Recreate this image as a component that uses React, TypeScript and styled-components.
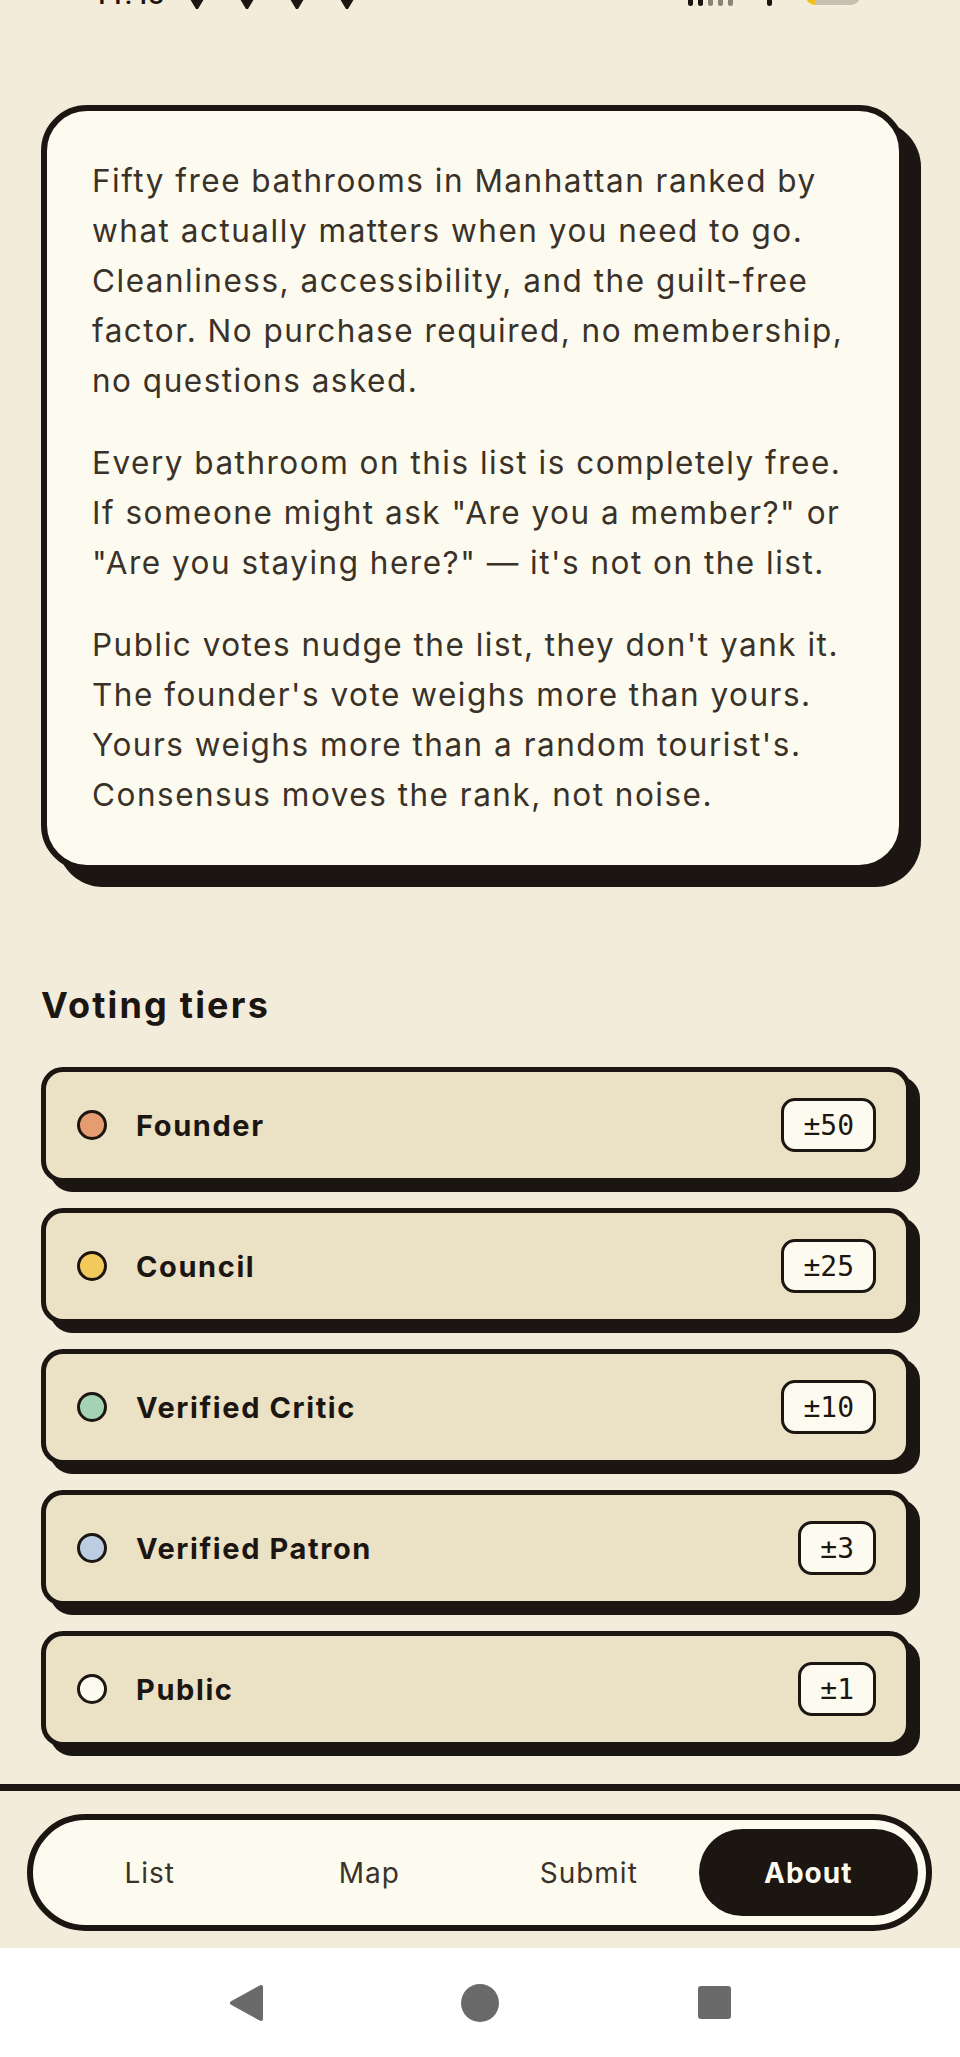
import React from "react";
import styled, { createGlobalStyle } from "styled-components";

const C = {
  bg: "#f3ecda",
  cream: "#fdfbef",
  row: "#ebe1c5",
  ink: "#1b1612",
  text: "#3a3229",
  sysIcon: "#6a6a6a",
};

const GlobalStyle = createGlobalStyle`
  html, body { margin: 0; padding: 0; background: ${C.bg}; }
  body { font-family: Inter, "Noto Sans", sans-serif; -webkit-font-smoothing: antialiased; }
  * { box-sizing: border-box; }
`;

const Screen = styled.div`
  min-height: 100vh;
  display: flex;
  flex-direction: column;
  background: ${C.bg};
`;

/* ---------- status bar (mostly scrolled off the top) ---------- */
const StatusBar = styled.div`
  height: 9px;
  overflow: hidden;
  display: flex;
  align-items: flex-end;
  justify-content: space-between;
  padding: 0 100px 0 93px;
`;

const StatusGroup = styled.div<{ gap: number }>`
  display: flex;
  align-items: flex-end;
  gap: ${(p) => p.gap}px;
`;

const Clock = styled.span`
  font-family: Roboto, sans-serif;
  font-size: 28px;
  line-height: 1;
  font-weight: 500;
  color: ${C.ink};
  margin-right: -4px;
`;

const NotifIcon = () => (
  <svg width="26" height="22" viewBox="0 0 26 22" style={{ display: "block", marginBottom: -2 }}>
    <path d="M6 10 L20 10 L14 20 L12 20 Z" fill={C.ink} />
  </svg>
);

const SignalDot = styled.span<{ dim?: boolean }>`
  width: 5px;
  height: 14px;
  border-radius: 3px;
  background: ${(p) => (p.dim ? "#8a8377" : C.ink)};
  margin-bottom: 3px;
`;

const Spacer = styled.span<{ w: number }>`
  width: ${(p) => p.w}px;
`;

const Battery = styled.span`
  width: 54px;
  height: 26px;
  border-radius: 9px;
  margin-bottom: 4px;
  background: linear-gradient(to right, #f2c21b 0 9px, #c6c0b1 9px);
`;

/* ---------- main content ---------- */
const Content = styled.main`
  flex: 1;
  padding: 96px 39px 30px 41px;
`;

const AboutCard = styled.section`
  width: 864px;
  background: ${C.cream};
  border: 6px solid ${C.ink};
  border-radius: 46px;
  box-shadow: 16px 16px 0 ${C.ink};
  padding: 45px 44px 45px 45px;
  display: flex;
  flex-direction: column;
  gap: 32px;
`;

const Para = styled.p`
  margin: 0;
  font-size: 31.5px;
  line-height: 50px;
  letter-spacing: 1.5px;
  color: ${C.text};
  font-weight: 400;
`;

const SectionTitle = styled.h2`
  margin: 113px 0 0;
  font-size: 36px;
  line-height: 43px;
  font-weight: 700;
  color: ${C.ink};
  letter-spacing: 2.2px;
`;

const TierList = styled.ul`
  list-style: none;
  margin: 40px 0 0;
  padding: 0;
  display: flex;
  flex-direction: column;
  gap: 25px;
`;

const TierRow = styled.li`
  width: 870px;
  height: 116px;
  background: ${C.row};
  border: 5px solid ${C.ink};
  border-radius: 22px;
  box-shadow: 9px 9px 0 ${C.ink};
  display: flex;
  align-items: center;
  padding: 0 30px 0 31px;
`;

const Dot = styled.span<{ color: string }>`
  width: 30px;
  height: 30px;
  border-radius: 50%;
  border: 3px solid ${C.ink};
  background: ${(p) => p.color};
  flex: none;
`;

const TierName = styled.span`
  margin-left: 29px;
  font-size: 29px;
  font-weight: 700;
  letter-spacing: 1.6px;
  color: ${C.ink};
  flex: 1;
`;

const Weight = styled.span`
  height: 54px;
  display: inline-flex;
  align-items: center;
  padding: 0 19px;
  border: 3px solid ${C.ink};
  border-radius: 14px;
  background: ${C.cream};
  font-family: "DejaVu Sans Mono", "Liberation Mono", monospace;
  font-size: 28px;
  color: ${C.ink};
`;

/* ---------- bottom nav ---------- */
const BottomBar = styled.nav`
  height: 164px;
  border-top: 7px solid ${C.ink};
  padding: 23px 28px 0 27px;
  background: ${C.bg};
`;

const TabPill = styled.div`
  height: 117px;
  border: 6px solid ${C.ink};
  border-radius: 60px;
  background: ${C.cream};
  display: grid;
  grid-template-columns: repeat(4, 1fr);
  align-items: center;
  padding: 0 8px 0 7px;
`;

const Tab = styled.div<{ active?: boolean }>`
  height: 87px;
  border-radius: 44px;
  display: flex;
  align-items: center;
  justify-content: center;
  font-size: 28px;
  letter-spacing: 1px;
  font-weight: ${(p) => (p.active ? 700 : 400)};
  color: ${(p) => (p.active ? C.cream : C.text)};
  background: ${(p) => (p.active ? C.ink : "transparent")};
`;

const SystemNav = styled.div`
  height: 109px;
  background: #ffffff;
  display: flex;
  align-items: center;
  justify-content: center;
  gap: 196px;
`;

const SysSlot = styled.div`
  width: 38px;
  height: 38px;
  display: flex;
  align-items: center;
  justify-content: center;
`;

const tiers = [
  { name: "Founder", color: "#e59c70", weight: "±50" },
  { name: "Council", color: "#f3c95b", weight: "±25" },
  { name: "Verified Critic", color: "#a3d3b2", weight: "±10" },
  { name: "Verified Patron", color: "#bccde2", weight: "±3" },
  { name: "Public", color: C.cream, weight: "±1" },
];

export default function App() {
  return (
    <Screen>
      <GlobalStyle />
      <StatusBar>
        <StatusGroup gap={24}>
          <Clock>11:48</Clock>
          <NotifIcon />
          <NotifIcon />
          <NotifIcon />
          <NotifIcon />
        </StatusGroup>
        <StatusGroup gap={5}>
          <SignalDot />
          <SignalDot />
          <SignalDot dim />
          <SignalDot dim />
          <SignalDot dim />
          <Spacer w={24} />
          <SignalDot />
          <Spacer w={24} />
          <Battery />
        </StatusGroup>
      </StatusBar>

      <Content>
        <AboutCard>
          <Para>
            Fifty free bathrooms in Manhattan ranked by what actually matters when you need to go.
            Cleanliness, accessibility, and the guilt-free factor. No purchase required, no
            membership, no questions asked.
          </Para>
          <Para>
            Every bathroom on this list is completely free. If someone might ask "Are you a
            member?" or "Are you staying here?" — it's not on the list.
          </Para>
          <Para>
            Public votes nudge the list, they don't yank it. The founder's vote weighs more than
            yours. Yours weighs more than a random tourist's. Consensus moves the rank, not noise.
          </Para>
        </AboutCard>

        <SectionTitle>Voting tiers</SectionTitle>
        <TierList>
          {tiers.map((t) => (
            <TierRow key={t.name}>
              <Dot color={t.color} />
              <TierName>{t.name}</TierName>
              <Weight>{t.weight}</Weight>
            </TierRow>
          ))}
        </TierList>
      </Content>

      <BottomBar>
        <TabPill>
          <Tab>List</Tab>
          <Tab>Map</Tab>
          <Tab>Submit</Tab>
          <Tab active>About</Tab>
        </TabPill>
      </BottomBar>

      <SystemNav>
        <SysSlot>
          <svg width="36" height="38" viewBox="0 0 36 38">
            <path
              d="M33 3 L33 35 L4 19 Z"
              fill={C.sysIcon}
              stroke={C.sysIcon}
              strokeWidth="4"
              strokeLinejoin="round"
            />
          </svg>
        </SysSlot>
        <SysSlot>
          <svg width="38" height="38" viewBox="0 0 38 38">
            <circle cx="19" cy="19" r="19" fill={C.sysIcon} />
          </svg>
        </SysSlot>
        <SysSlot>
          <svg width="33" height="33" viewBox="0 0 33 33">
            <rect x="0" y="0" width="33" height="33" rx="3" fill={C.sysIcon} />
          </svg>
        </SysSlot>
      </SystemNav>
    </Screen>
  );
}
